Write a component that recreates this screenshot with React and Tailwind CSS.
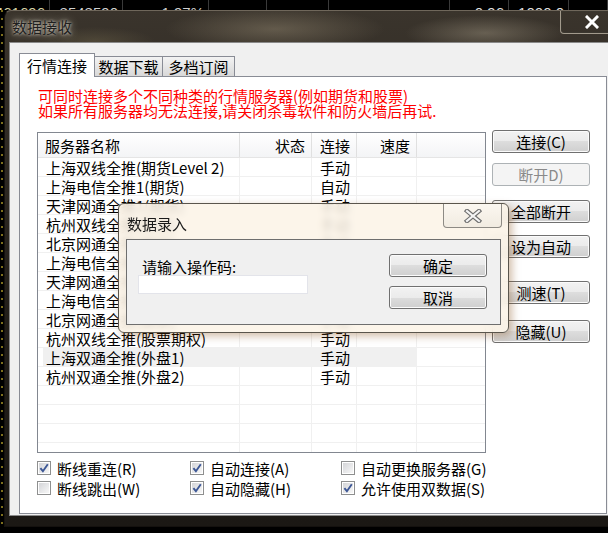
import React from 'react'

const ticker = [
  { w: 50, t: '461696', c: 'text-[#d8d4a8]' },
  { w: 73, t: '8548590', c: 'text-[#d0d0d0]' },
  { w: 86, t: '1.97%', c: 'text-[#d0d0d0]' },
  { w: 58, t: '', c: '' },
  { w: 62, t: '', c: '' },
  { w: 121, t: '', c: '' },
  { w: 59, t: '0.96', c: 'text-[#e0e0e0]' },
  { w: 60, t: '1000.0', c: 'text-[#e0e0e0]' },
  { w: 39, t: '', c: '' },
]

const rows = [
  ['上海双线全推(期货Level 2)', '手动'],
  ['上海电信全推1(期货)', '自动'],
  ['天津网通全推1(期货)', '手动'],
  ['杭州双线全推(期货)', '手动'],
  ['北京网通全推(期货)', '手动'],
  ['上海电信全推(股票)', '手动'],
  ['天津网通全推(股票)', '手动'],
  ['上海电信全推2(股票)', '手动'],
  ['北京网通全推(股票)', '手动'],
  ['杭州双线全推(股票期权)', '手动'],
  ['上海双通全推(外盘1)', '手动', true],
  ['杭州双通全推(外盘2)', '手动'],
  ['', ''],
  ['', ''],
  ['', ''],
  ['', ''],
]

function Btn({ children, disabled, className = '' }) {
  return (
    <div
      className={`h-[23px] w-[98px] rounded-[3px] border flex items-center justify-center text-[15px] leading-[15px] ${disabled
        ? 'border-[#adb2b5] bg-[#f4f4f4] text-[#8a8a8a]'
        : 'border-[#707070] bg-[linear-gradient(to_bottom,#f2f2f2_0%,#ebebeb_50%,#dddddd_50%,#cfcfcf_100%)] text-black shadow-[inset_0_0_0_1px_#fbfbfb]'
        } ${className}`}
    >
      {children}
    </div>
  )
}

function Check({ checked, label }) {
  return (
    <div className="flex items-center gap-[6px] h-[20px]">
      <span className="w-[14px] h-[14px] shrink-0 border border-[#8e8f8f] bg-white p-px flex">
        <span className="flex-1 flex items-center justify-center bg-[linear-gradient(135deg,#d4d5d8,#f7f7f7)]">
          {checked && (
            <svg width="10" height="10" viewBox="0 0 10 10">
              <path d="M1.4 5.2 L3.9 8.2 L8.8 1.2" fill="none" stroke="#3d5795" strokeWidth="1.9" />
            </svg>
          )}
        </span>
      </span>
      <span className="text-[15px] leading-[15px] text-black whitespace-nowrap">{label}</span>
    </div>
  )
}

function ServerTable() {
  return (
    <div className="w-[449px] h-[321px] border border-[#828790] bg-white overflow-hidden flex flex-col">
      <div className="flex h-[25px] shrink-0 border-b border-[#e5e5e5] bg-[linear-gradient(to_bottom,#ffffff,#f3f4f6)] text-[15px] leading-[15px] text-black">
        <div className="w-[202px] border-r border-[#e0e0e0] flex items-center pl-[7px]">服务器名称</div>
        <div className="w-[72px] border-r border-[#e0e0e0] flex items-center justify-end pr-[6px]">状态</div>
        <div className="w-[45px] border-r border-[#e0e0e0] flex items-center justify-end pr-[6px]">连接</div>
        <div className="w-[60px] border-r border-[#e0e0e0] flex items-center justify-end pr-[6px]">速度</div>
        <div className="flex-1"></div>
      </div>
      {rows.map(([name, mode, sel], i) => (
        <div key={i} className="flex h-[19px] shrink-0 border-b border-[#f0f0f0] text-[15px] leading-[15px] text-black">
          <div
            className={`w-[202px] border-r border-[#f0f0f0] flex items-center pl-[8px] whitespace-nowrap ${sel ? 'bg-[linear-gradient(to_right,transparent_5px,#f0f0f0_5px)]' : ''}`}
          >
            {name}
          </div>
          <div className={`w-[72px] border-r border-[#f0f0f0] ${sel ? 'bg-[#f0f0f0]' : ''}`}></div>
          <div className={`w-[45px] border-r border-[#f0f0f0] flex items-center pl-[8px] ${sel ? 'bg-[#f0f0f0]' : ''}`}>
            {mode}
          </div>
          <div className={`w-[60px] border-r border-[#f0f0f0] ${sel ? 'bg-[#f0f0f0]' : ''}`}></div>
          <div className="flex-1"></div>
        </div>
      ))}
    </div>
  )
}

function InputDialog() {
  return (
    <div className="absolute left-[118px] top-[203px] w-[391px] h-[130px] rounded-[6px] border border-[#5a554c] bg-[#fbf3e6]/85 backdrop-blur-[3px] shadow-[3px_3px_8px_rgba(120,60,0,0.35)] flex flex-col px-[7px]">
      <div className="h-[35px] shrink-0 flex items-start justify-between">
        <span className="pl-[1px] pt-[12px] text-[15px] leading-[15px] text-[#1a1a1a]">数据录入</span>
        <div className="w-[59px] h-[24px] -mr-[1px] rounded-b-[4px] border border-t-0 border-[#8d8a84] bg-[linear-gradient(to_bottom,#fbf7f0,#f1ebe1)] flex items-center justify-center">
          <svg width="20" height="14" viewBox="0 0 20 14">
            <path d="M4 2 L16 12 M16 2 L4 12" stroke="#6d6d6d" strokeWidth="4.4" strokeLinecap="square" />
            <path d="M4 2 L16 12 M16 2 L4 12" stroke="#f4f4f4" strokeWidth="2.2" strokeLinecap="square" />
          </svg>
        </div>
      </div>
      <div className="h-[86px] shrink-0 border border-[#6e6e6e] bg-[#f0f0f0] flex">
        <div className="pl-[11px] pt-[19px] flex flex-col">
          <span className="pl-[4px] text-[15px] leading-[15px] text-black">请输入操作码:</span>
          <div className="mt-[1px] w-[170px] h-[19px] bg-white border border-[#e3e4ea]"></div>
        </div>
        <div className="ml-auto mr-[13px] pt-[14px] flex flex-col gap-[9px]">
          <Btn>确定</Btn>
          <Btn>取消</Btn>
        </div>
      </div>
    </div>
  )
}

export default function App() {
  return (
    <div className="relative w-[608px] h-[533px] bg-black overflow-hidden font-['Noto_Sans_CJK_SC',sans-serif]">
      <div className="flex h-[10px] overflow-hidden font-['Liberation_Sans',sans-serif]">
        {ticker.map((c, i) => (
          <div
            key={i}
            style={{ width: c.w }}
            className={`shrink-0 h-[10px] border-r border-[#3a3a3a] flex justify-end items-start pt-[5px] pr-[4px] text-[15px] leading-[15px] ${c.c}`}
          >
            {c.t}
          </div>
        ))}
      </div>

      <div className="flex h-[517px]">
        <div className="w-[4px] shrink-0 flex">
          <div className="w-[2px] ml-px bg-[repeating-linear-gradient(to_bottom,#7e6f1c_0px,#7e6f1c_2px,transparent_2px,transparent_8px)]"></div>
        </div>

        <div className="w-[620px] shrink-0 flex flex-col rounded-tl-[7px] border border-[#14110e] border-t-[#6f675b] bg-[radial-gradient(ellipse_110px_22px_at_270px_18px,rgba(150,138,115,0.45),transparent),radial-gradient(ellipse_80px_18px_at_480px_22px,rgba(160,150,130,0.45),transparent),radial-gradient(ellipse_60px_14px_at_90px_30px,rgba(120,110,80,0.35),transparent),linear-gradient(to_bottom,#3a342c,#221e19_60%,#1b1814)]">
          <div className="h-[31px] shrink-0 flex items-start">
            <span className="flex-1 self-center pl-[7px] text-[15px] leading-[15px] text-[#202020] [text-shadow:0_0_3px_rgba(240,232,215,0.9),0_0_8px_rgba(240,232,215,0.7)]">
              数据接收
            </span>
            <div className="mr-[5px] w-[58px] h-[23px] rounded-b-[4px] border border-t-0 border-[#a29a8c] shadow-[inset_0_0_0_1px_rgba(60,55,48,0.9)] flex items-center justify-center">
              <svg width="14" height="14" viewBox="0 0 14 14" className="ml-[5px] -mt-[1px]">
                <path d="M2 2 L12 12 M12 2 L2 12" stroke="#ffffff" strokeWidth="3" strokeLinecap="square" />
              </svg>
            </div>
          </div>

          <div className="mx-[4px] h-[474px] shrink-0 border border-[#8a8a8a] bg-[#f0f0f0] pl-[9px] pt-[10px] flex flex-col">
            <div className="flex items-end h-[24px] -mb-px text-[15px] leading-[15px] text-black">
              <div className="relative z-10 w-[76px] h-[24px] bg-white border border-b-0 border-[#898c95] flex items-center justify-center">
                行情连接
              </div>
              <div className="w-[68px] h-[21px] border border-l-0 border-[#898c95] bg-[linear-gradient(to_bottom,#f3f3f3,#e6e6e6_50%,#d8d8d8)] flex items-center justify-center">
                数据下载
              </div>
              <div className="w-[72px] h-[21px] border border-l-0 border-[#898c95] bg-[linear-gradient(to_bottom,#f3f3f3,#e6e6e6_50%,#d8d8d8)] flex items-center justify-center">
                多档订阅
              </div>
            </div>

            <div className="w-[588px] h-[438px] shrink-0 border border-[#898c95] bg-white pl-[17px] pt-[11px] flex flex-col">
              <div className="pl-px text-[15px] leading-[15px] text-[#ff0000] whitespace-nowrap">
                <div>可同时连接多个不同种类的行情服务器(例如期货和股票)</div>
                <div>如果所有服务器均无法连接,请关闭杀毒软件和防火墙后再试.</div>
              </div>

              <div className="mt-[14px] flex items-start">
                <ServerTable />
                <div className="ml-[6px] -mt-[2px] flex flex-col">
                  <Btn>连接(C)</Btn>
                  <Btn disabled className="mt-[10px]">断开D)</Btn>
                  <Btn className="mt-[14px]">全部断开</Btn>
                  <Btn className="mt-[12px]">设为自动</Btn>
                  <Btn className="mt-[23px]">测速(T)</Btn>
                  <Btn className="mt-[16px]">隐藏(U)</Btn>
                </div>
              </div>

              <div className="mt-[5px] grid grid-cols-[153px_151px_1fr]">
                <Check checked label="断线重连(R)" />
                <Check checked label="自动连接(A)" />
                <Check label="自动更换服务器(G)" />
                <Check label="断线跳出(W)" />
                <Check checked label="自动隐藏(H)" />
                <Check checked label="允许使用双数据(S)" />
              </div>
            </div>
          </div>
        </div>
      </div>

      <InputDialog />
    </div>
  )
}
